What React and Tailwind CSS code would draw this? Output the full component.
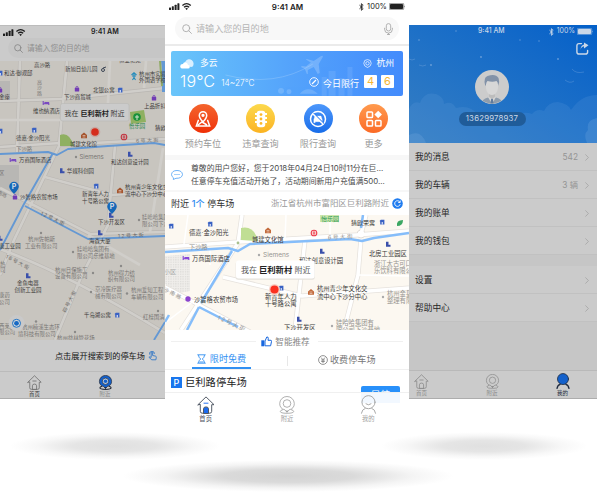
import React from "react";

/* ---------- shared glyphs ---------- */
const Signal = () => (
  <svg className="h-[9px] w-[24px]" viewBox="0 0 24 9" fill="currentColor">
    <rect x="0" y="5.5" width="2" height="2.5" rx=".5" />
    <rect x="2.8" y="4.3" width="2" height="3.7" rx=".5" />
    <rect x="5.6" y="2.8" width="2" height="5.2" rx=".5" />
    <rect x="8.4" y="1.2" width="2" height="6.8" rx=".5" />
    <g fill="none" stroke="currentColor" strokeWidth="1.3">
      <path d="M13.4 3.4Q17.6-.2 21.8 3.4" />
      <path d="M15 5.3Q17.6 3.2 20.2 5.3" />
    </g>
    <path d="M16.2 6.6Q17.6 5.6 19 6.6L17.6 8.1z" />
  </svg>
);
const Power = () => (
  <div className="flex items-center gap-[3px]">
    <svg className="h-[8px] w-[5px]" viewBox="0 0 5 8" fill="none" stroke="currentColor" strokeWidth=".9">
      <path d="M.5 2.2 4.2 5.6 2.4 7.3V.7L4.2 2.4.5 5.8" />
    </svg>
    <span>100%</span>
    <svg className="-ml-[1px] h-[7px] w-[17px]" viewBox="0 0 17 7">
      <rect x=".3" y=".3" width="14.4" height="6.4" rx="1.2" fill="none" stroke="currentColor" strokeWidth=".5" />
      <rect x="1" y="1" width="13" height="5" rx=".7" fill="currentColor" />
      <path d="M15.5 2.4q1 1 0 2.2z" fill="currentColor" />
    </svg>
  </div>
);
const SearchIcon = ({ className }) => (
  <svg className={className} viewBox="0 0 10 10" fill="none" stroke="currentColor" strokeWidth=".9" strokeLinecap="round">
    <circle cx="4.2" cy="4.2" r="3.5" />
    <path d="m6.8 6.8 2.6 2.6" />
  </svg>
);
const HomeIcon = ({ className, active }) => (
  <svg className={className} viewBox="0 0 18 18" fill="none" stroke="currentColor" strokeWidth=".95" strokeLinejoin="round" strokeLinecap="round">
    <path d="M1 8.7 9 .9l8 7.8H14.7v6.6q0 1.9-1.9 1.9H5.2q-1.9 0-1.9-1.9V8.7z" />
    <path d="M6.5 17.1v-4.2q0-2 2.5-2t2.5 2v4.2z" fill={active ? "#1b6bf0" : "none"} />
    <path d="M7 7.2h4" stroke={active ? "#1b6bf0" : "currentColor"} />
  </svg>
);
const NearIcon = ({ className, active }) => (
  <svg className={className} viewBox="0 0 18 18" fill="none" stroke="currentColor" strokeWidth=".85">
    <path d="M5 13.6q-2.7.7-2.7 1.8 0 1.9 6.7 1.9t6.7-1.9q0-1.1-2.7-1.8" strokeWidth={active ? "1.3" : ".85"} />
    <path d="M9 16.1 7 13.9Q1.7 12.6 1.7 7.6A7.2 7.2 0 0 1 9 .5a7.2 7.2 0 0 1 7.3 7.1q0 5-5.3 6.3z" fill={active ? "#1461cb" : "none"} />
    <circle cx="9" cy="7.5" r="3.8" fill={active ? "#bed1e8" : "none"} />
    {active && <circle cx="9" cy="7.5" r="2.1" fill="#1461cb" stroke="none" />}
    <path d="m8 15 1 1.3 1-1.3z" fill="currentColor" />
  </svg>
);
const MineIcon = ({ className, active }) => (
  <svg className={className} viewBox="0 0 18 18" fill="none" stroke="currentColor" strokeWidth=".9" strokeLinecap="round">
    <circle cx="9" cy="6.8" r="6.2" fill={active ? "#1461cb" : "none"} />
    {!active && <path d="M6.6 8.4q2.4 2 4.8 0" />}
    <path d="M5.8 12.7Q2.8 13.5 2.3 17.3M12.2 12.7q3 .8 3.5 4.6" strokeWidth={active ? "1.5" : ".9"} />
  </svg>
);

/* ---------- map glyphs ---------- */
const T = ({ x, y, s = 5.4, f = "#3b3a39", r = 0, w = 400, children }) => (
  <text x={x} y={y + s * 0.37} fontSize={s} fill={f} fontWeight={w} transform={r ? `rotate(${r} ${x} ${y})` : undefined}>
    {children}
  </text>
);
const Bld = ({ x, y, c = "#3a50ab" }) => (
  <path d={`M${x - 2} ${y - 2.2}h2.5v3h2v2h-4.5z`} fill={c} />
);
const Hs = ({ x, y, c = "#3a62c4" }) => (
  <g>
    <path d={`M${x - 2.4} ${y - 1}l1.2-1.2h3.6v4.6h-4.2v-2.6z`} fill={c} />
    <path d={`M${x - 0.4} ${y}h1.4v2.4h-1.4z`} fill="#fff" opacity=".7" />
  </g>
);
const Hall = ({ x, y, c }) => (
  <g>
    <path d={`M${x - 3} ${y - 0.6}l3-2.4 3 2.4v3.4h-6z`} fill={c} />
    <path d={`M${x - 1.4} ${y}h2.8M${x - 1.4} ${y + 1.5}h2.8`} stroke="#fff" strokeWidth=".6" opacity=".8" />
  </g>
);
const Bag = ({ x, y, c = "#713bb5" }) => (
  <g>
    <rect x={x - 2.2} y={y - 1.2} width="4.4" height="3.8" rx=".6" fill={c} />
    <path d={`M${x - 1.1} ${y - 1}q0-1.8 1.1-1.8t1.1 1.8`} fill="none" stroke={c} strokeWidth=".7" />
  </g>
);
const Bed = ({ x, y, c = "#7a4bc0" }) => (
  <path d={`M${x - 2.8} ${y - 2}v4M${x - 2.8} ${y + 0.8}h5.6v1.2M${x - 1.6} ${y - 0.4}h4.2v1`} fill="none" stroke={c} strokeWidth="1.1" />
);
const Dot = ({ x, y, c = "#8b8a88" }) => <circle cx={x} cy={y} r="1.2" fill={c} />;
const Metro = ({ x, y, c }) => (
  <g fill="none" stroke={c}>
    <circle cx={x} cy={y} r="2.8" strokeWidth="1.1" />
    <path d={`M${x} ${y - 2}v4M${x - 1.5} ${y}h3`} strokeWidth=".9" />
  </g>
);
const Parking = ({ x, y }) => (
  <g>
    <path d={`M${x} ${y + 7}q-4.8-4.6-4.8-7.4a4.8 4.8 0 0 1 9.6 0q0 2.8-4.8 7.4z`} fill="#1668b8" />
    <text x={x} y={y + 2} fontSize="7" fontWeight="700" fill="#d7dde4" textAnchor="middle">P</text>
  </g>
);

const G = "#787674";

function NearbyMap() {
  return (
    <svg className="h-[279px] w-[165px] shrink-0" viewBox="0 61 165 279">
      <rect x="0" y="61" width="165" height="279" fill="#c8c5bf" />
      <path d="M0 81h10v17H0zM0 165h19v35l-19-9z" fill="#b8b7b4" />
      <g fill="none" stroke="#b9b6b2" strokeWidth="3.8">
        <path d="M67 61 59 146 14 240 0 275M0 101 60 99 165 88M0 188 90 234 165 232M115 146 108 225 82 275 55 340M45 177 112 195 165 191M0 249Q70 275 165 333M20 61 17 152" />
        <path d="M59 145 165 139M0 147 60 143" />
      </g>
      <g fill="none" stroke="#d0ceca" strokeWidth="2.7">
        <path d="M67 61 59 146 14 240 0 275M0 101 60 99 165 88M0 188 90 234 165 232M115 146 108 225 82 275 55 340M45 177 112 195 165 191M0 249Q70 275 165 333M20 61 17 152" />
        <path d="M59 145 165 139M0 147 60 143M110 61 108 103M146 61 144 88M163 148 150 232M0 120 60 120M88 235 140 265" />
      </g>
      <g fill="none" stroke="#6498d3" strokeWidth="1.9" strokeLinejoin="round">
        <path d="M0 154 48 152 57 155 68 149 108 146 154 143 165 145M53 153 24 204 0 250M25 206 88 239 165 236M165 322 154 340M162 61 165 90" />
        <path d="M164 61V92" strokeWidth="4" />
      </g>
      <path d="M159 61h2l2 25h-2z" fill="#90ab67" />
      <path d="M60 146V135q9-4 14 11zM130 112l14-2 2 12-15 2z" fill="#8fb061" />
      <circle cx="137" cy="117" r="3.8" fill="#18913a" />
      <path d="M137 115v5m-2-3h4" stroke="#d2dfcc" strokeWidth="1" />
      <T x={34} y={65}>高沙路</T><T x={119} y={60}>恒业花苑</T>
      <T x={4} y={73}>和达·御观邸</T><Hs x={0} y={73} />
      <T x={65} y={69}>新旭日幼儿园</T>
      <circle cx="103" cy="70" r="1.5" fill="none" stroke="#3d4655" /><path d="m103 68 3-1" stroke="#3d4655" />
      <path d="M131.500 75 134 72.800l2.500 2.200M134 74v4.500M132 76h4M132.500 80l1.500-2.500 1.500 2.500" fill="none" stroke="#238bbb" strokeWidth="1.100" />
      <T x={139} y={74}>杭州市实验</T><T x={139} y={80.5}>外国语学校</T>
      <T x={37} y={82} s={5} f={G}>高</T><T x={37} y={87.5} s={5} f={G}>沙</T><T x={37} y={93} s={5} f={G}>路</T>
      <Bag x={77} y={89} /><T x={93} y={90.5}>北银公寓</T><Hs x={120} y={90} />
      <T x={64} y={97.5}>下沙商贸城</T><T x={-1} y={97.5}>金座</T><Bag x={0} y={90} />
      <Bed x={46} y={103} /><T x={33} y={111}>维也纳酒店</T>
      <Bag x={154} y={98} /><T x={144} y={106}>上品折扣</T>
      <T x={129} y={126} f="#25844a">怡乐园</T><T x={155} y={128.5}>猜欧</T>
      <Hs x={34} y={130} /><Hs x={0} y={131} /><T x={16} y={138}>德嘉·金沙阳光</T>
      <Hall x={84} y={135.5} c="#a5542d" /><T x={70} y={144}>城建文化馆</T>
      <Metro x={124} y={137} c="#c23440" /><T x={136} y={141} s={5} r={-3} f={G}>6 号 大 街</T>
      <T x={16} y={149.5} f={G}>下沙路</T>
      <Dot x={76} y={157} /><T x={79.5} y={157} s={6} f={G}>Siemens</T>
      <Bed x={13} y={160} /><T x={19} y={160.5}>万商国际酒店</T>
      <Bld x={130} y={154} /><T x={111} y={162.5}>和达创意设计园</T>
      <Bld x={62} y={170.5} /><T x={67} y={171}>华媒科创园</T><T x={-1} y={173} f={G}>区</T>
      <Bag x={15} y={197} /><T x={20} y={197}>沙智格农贸市场</T><T x={-2} y={192} r={27} s={4.8} f={G}>南路</T>
      <Hs x={96} y={186} /><T x={82} y={194}>新青年人力</T><T x={82} y={201}>十号路公寓</T>
      <Hall x={120} y={190.5} c="#a5542d" /><T x={125} y={187.5}>杭州青少年文化交</T><T x={125} y={194}>流中心下沙分中心</T>
      <Bld x={111} y={215} /><T x={98} y={222}>下沙开发区</T>
      <Dot x={139} y={220} /><T x={142} y={217.5} f={G}>娃哈哈集团</T><T x={142} y={224} f={G}>限公司下沙</T>
      <T x={41} y={213} s={5} r={25} f="#696765">1 2 号 大 街</T><T x={118} y={236} s={5} r={-3} f="#696765">1 2 号 大 街</T>
      <Dot x={41} y={233} /><T x={28} y={239.5} f={G}>杭州佐帕斯</T><T x={25} y={246} f={G}>工业有限公司</T>
      <Bld x={0} y={238} /><T x={-1} y={246}>康工业园</T>
      <Bld x={100} y={232.5} /><T x={89} y={241}>海森大厦</T>
      <Dot x={73} y={252} /><T x={77} y={249.5} f={G}>娃哈哈集团有</T><T x={77} y={256} f={G}>限公司乐维基地</T>
      <T x={6} y={256} s={5} r={28} f="#696765">1 6 号 大 街</T>
      <Dot x={93} y={273} /><T x={55} y={270} f={G}>杭州日保施工</T><T x={55} y={276.5} f={G}>设备有限公司</T>
      <Dot x={121} y={266} /><T x={108} y={273} f={G}>杭州得力纺</T><T x={108} y={279} f={G}>织有限公司</T>
      <T x={0} y={264} f={G}>热</T><T x={0} y={270.5} f={G}>司</T>
      <Bld x={28} y={275.5} /><T x={17} y={283.5}>金鱼电器</T><T x={14.5} y={290}>创新工业园</T>
      <T x={-1} y={295.5} f={G}>康药</T><T x={-1} y={302} f={G}>公司</T>
      <Dot x={91} y={292} /><T x={95} y={289.5} f={G}>京冷医疗器</T><T x={95} y={296} f={G}>械有限公司</T>
      <Dot x={127} y={293.5} /><T x={131} y={290.5} f={G}>杭州爱知工程</T><T x={131} y={297} f={G}>车辆有限公司</T>
      <T x={64} y={312} s={4.8} r={-63} f="#696765">四 号 大 街</T>
      <T x={84} y={315.5}>千岛湖公寓</T><Hs x={117} y={315} />
      <Dot x={158} y={311} /><T x={143} y={317.5} f={G}>红桂国清</T>
      <T x={-1} y={326} f={G}>西莱斯</T><T x={-1} y={332} f={G}>限公司</T>
      <Dot x={36} y={321.5} /><T x={22} y={327.5} f={G}>杭州楠溪生态环</T><T x={18} y={334} f={G}>境科技有限公司</T>
      <Dot x={75} y={332} /><T x={57} y={338.5} f={G}>杭州益林管花场</T>
      <circle cx="16.5" cy="323" r="8" fill="#c9c9c9" />
      <circle cx="16.5" cy="323.3" r="4" fill="#d4d7da" stroke="#2073c5" /><circle cx="16.5" cy="323.3" r="2.4" fill="#1769c4" />
      <Parking x={14} y={187} /><Parking x={112} y={207} />
      <rect x="60.5" y="103.5" width="68.5" height="17.5" rx="2" fill="#cbcbcb" stroke="#b9b8b6" strokeWidth=".6" />
      <T x={64.5} y={113} s={7}>我在</T><T x={80.5} y={113} s={7.1} w={700} f="#222">巨利新村</T><T x={110.5} y={113} s={7}>附近</T>
      <circle cx="95" cy="132" r="5.3" fill="#c8aaa3" /><circle cx="95" cy="132" r="3.8" fill="#d52d1c" />
    </svg>
  );
}

function CenterMap() {
  const L = 6.3;
  const g = "#969490";
  return (
    <svg className="h-[115px] w-[244px] shrink-0" viewBox="165 215 244 115">
      <rect x="165" y="215" width="244" height="115" fill="#fcf8f1" />
      <defs>
        <pattern id="blocks" width="2.4" height="2.4" patternUnits="userSpaceOnUse">
          <rect width="2.4" height="2.4" fill="#f0eeeb" /><rect width="1.3" height="1.3" fill="#dddcd9" />
        </pattern>
      </defs>
      <path d="M165 256l25-2v37l-10 2-15-9z" fill="url(#blocks)" />
      <g fill="none" stroke="#e6e2dd" strokeWidth="5">
        <path d="M242 215 238 243 181 330M165 247 238 242 356 235 409 231M165 287 250 332M223 277 302 296 409 288M305 240 295 330M361 239 358 275 344 330M361 234 366 215" />
      </g>
      <circle cx="361" cy="234" r="4" fill="#fff" stroke="#e1ddd8" />
      <g fill="none" stroke="#fff" strokeWidth="3.5">
        <path d="M242 215 238 243 181 330M165 247 238 242 356 235 409 231M165 287 250 332M223 277 302 296 409 288M305 240 295 330M361 239 358 275 344 330M361 234 366 215" />
        <path d="M188 215 184 244M286 215 285 239M330 215V234M210 250V265M409 276 358 275M165 323 195 300" strokeWidth="1.5" />
      </g>
      <g fill="none" stroke="#85bdfa" strokeWidth="2.5" strokeLinejoin="round">
        <path d="M165 252 228 248 238 251 250 244 350 239 362 241 374 238 409 233M232 251 201 303M199 307 187 330M199 307 238 327M361 228 363 215M165 322 169 315" />
      </g>
      <path d="M241 240V228q13-3 17 13z" fill="#c0de94" />
      <circle cx="238" cy="243" r="1.4" fill="#a8bf8d" />
      <rect x="320" y="214" width="19" height="8" fill="#cde7ae" />
      <T x={321} y={219} s={6} f="#319a58">怡乐园</T>
      <Hs x={171} y={226} /><Hs x={210} y={224} /><T x={189} y={233} s={L}>德嘉·金沙阳光</T>
      <Hall x={268} y={230.5} c="#c36a3b" /><T x={252} y={239.5} s={L}>城建文化馆</T>
      <T x={351} y={222.5} s={6}>猜欧荣寓</T><Hs x={382} y={222} />
      <path d="M397 226q-1-6 6-6 0 6-6 6z" fill="#3ba763" />
      <Metro x={314} y={233} c="#ed3c4d" /><T x={328} y={237.5} s={5.5} r={-3} f={g}>6 号 大 街</T>
      <T x={189} y={246.5} s={6.2} f={g}>下沙路</T>
      <Bed x={186} y={258} c="#8746d8" /><T x={192} y={259} s={L}>万商国际酒店</T>
      <Dot x={259} y={255} c="#aaa" /><T x={263} y={255} s={6.5} f={g}>Siemens</T>
      <Bld x={322} y={251} /><T x={299} y={260.5} s={L}>和达创意设计园</T>
      <Bld x={388} y={244} /><T x={369} y={253.5} s={L}>北房工业园区</T>
      <T x={374} y={263.5} s={L} f={g}>浙江太古可口</T><T x={374} y={271} s={L} f={g}>乐饮料有限公</T>
      <T x={164} y={272} s={6} f="#aaa">小区</T>
      <circle cx="188" cy="299" r="2.7" fill="#8b44cf" /><T x={194} y={299.5} s={L}>沙智格农贸市场</T>
      <T x={164} y={289} s={5.3} r={27} f={g}>沙 南 路</T>
      <Hs x={281} y={288} /><T x={265} y={297} s={L}>新青年人力</T><T x={265} y={304} s={L}>十号路公寓</T>
      <Hall x={311} y={292} c="#c36a3b" /><T x={317} y={289} s={L}>杭州青少年文化交</T><T x={317} y={296.5} s={L}>流中心下沙分中心</T>
      <T x={218} y={317} s={5.8} r={25} f={g}>1 2 号 大 街</T>
      <Bld x={299} y={319} /><T x={284} y={328} s={L}>下沙开发区</T>
      <Dot x={332} y={326} c="#aaa" /><T x={336} y={323} s={L} f={g}>娃哈哈集团有</T><T x={336} y={329.5} s={L} f={g}>限公司下沙基地</T>
      <Dot x={383} y={297} c="#aaa" /><T x={387} y={294} s={L} f={g}>杭州金星</T><T x={387} y={301} s={L} f={g}>整理有限</T>
      <rect x="235.7" y="261.5" width="79" height="18.200" rx="2.5" fill="#e5e2dc" />
      <rect x="236" y="260.5" width="78.5" height="18" rx="2.5" fill="#fff" />
      <T x={241} y={270} s={8} f="#555">我在</T><T x={259} y={270} s={8.3} w={700} f="#222">巨利新村</T><T x={294.5} y={270} s={8} f="#555">附近</T>
      <circle cx="274.5" cy="289.5" r="5.5" fill="#f9cfc4" /><circle cx="274.5" cy="289.5" r="4.1" fill="#fb3120" />
    </svg>
  );
}

/* ---------- left phone ---------- */
function NearbyPhone() {
  return (
    <section className="mt-[25px] h-[374px] w-[165px] shrink-0 overflow-hidden border-b border-[#adadad] bg-[#cbcbcb] text-[#1c1c1c]">
      <div className="flex h-[13px] w-[209px] items-center border-t border-[#bcbcbc] pl-[3px]">
        <Signal />
        <span className="ml-[64px] text-[7.1px] font-semibold leading-none">9:41 AM</span>
      </div>
      <div className="flex h-[23px] pl-[8px]">
        <div className="flex h-[20px] w-[190px] shrink-0 items-center gap-[4px] rounded-full bg-[#c6c6c6] pl-[6px] text-[#858585]">
          <SearchIcon className="h-[9px] w-[9px]" />
          <span className="pt-px text-[7.8px] leading-none text-[#8f8f8f]">请输入您的目的地</span>
        </div>
      </div>
      <NearbyMap />
      <div className="flex h-[31px] items-center justify-end gap-[3px] pr-[8px]">
        <span className="pt-px text-[8.2px] leading-none text-[#151515]">点击展开搜索到的停车场</span>
        <svg className="h-[10px] w-[9px]" viewBox="0 0 9 10" fill="none" stroke="#3478c5" strokeWidth=".9" strokeLinejoin="round">
          <path d="M3.2 6.4V2q0-.9.7-.9t.7.9v2.5l2.8.6q1 .2.9 1.2L7.9 8.8H3.8L.9 6.3q.7-1 2.3.1z" />
          <path d="M1.5 3.5Q1 .5 3.9.4T6.3 3" />
        </svg>
      </div>
      <div className="flex h-[28px] w-[212px] border-t border-[#bbb]">
        <div className="flex w-[69px] flex-col items-center pt-[3px] text-[#6c6c6c]">
          <HomeIcon className="h-[15px] w-[15px]" />
          <span className="mt-[1px] text-[5.4px] leading-[7px] text-[#333]">首页</span>
        </div>
        <div className="flex w-[72px] flex-col items-center pt-[3px] text-[#252b38]">
          <NearIcon active className="h-[15px] w-[15px]" />
          <span className="mt-[1px] text-[5.4px] leading-[7px] text-[#888]">附近</span>
        </div>
      </div>
    </section>
  );
}

/* ---------- centre phone ---------- */
const shortcuts = [
  { label: "预约车位", bg: "bg-linear-to-b from-[#f4632c] to-[#ef2e04]", w: "w-[76px]", icon: (
    <><path d="M9 11.8Q5.3 8 5.3 5.4a3.7 3.7 0 0 1 7.4 0Q12.7 8 9 11.8z" /><circle cx="9" cy="5.3" r=".9" /><path d="M5 10.4H4.3L2.3 16h13.4l-2-5.6H13M4 15l4-3 5 3" /></>
  ) },
  { label: "违章查询", bg: "bg-linear-to-b from-[#fcd94c] to-[#fbb321]", w: "w-[39px]", icon: (
    <><rect x="5.5" y="1.5" width="7" height="15" rx="2" fill="#fff" /><path d="M3 4h3M3 8h3M3 12h3M12 4h3M12 8h3M12 12h3" strokeWidth="2" /><g fill="#fcb92b" stroke="none"><circle cx="9" cy="4.6" r="1.4" /><circle cx="9" cy="9" r="1.4" /><circle cx="9" cy="13.4" r="1.4" /></g></>
  ) },
  { label: "限行查询", bg: "bg-linear-to-b from-[#4c97fb] to-[#176de9]", w: "w-[76px]", icon: (
    <><circle cx="9" cy="9" r="7.5" /><path d="M4.8 9.5 6 6h6l1.2 3.5v3.2h-1.4v-1H6.2v1H4.8z" fill="#fff" strokeWidth=".3" /><path d="m4.400 3.400 10.400 10.400" stroke="#2c7cf1" strokeWidth="1.500" /><path d="m3.8 3.8 10.4 10.4" /></>
  ) },
  { label: "更多", bg: "bg-linear-to-b from-[#ff9a4e] to-[#fb6a25]", w: "w-[35px]", icon: (
    <><rect x="2" y="2" width="5.5" height="5.5" rx=".8" /><rect x="2" y="10.5" width="5.5" height="5.5" rx=".8" /><rect x="10.5" y="10.5" width="5.5" height="5.5" rx=".8" /><path d="m13.2 1.8 2.700 2.700-2.700 2.700-2.700-2.700z" fill="#fff" /></>
  ) },
];

function Weather() {
  return (
    <div className="mx-[6px] mt-[5px] grid h-[45px] shrink-0 grid-cols-1 overflow-hidden rounded-[2px] bg-linear-to-r from-[#6ac5fa] via-[#55a4fb] to-[#438bfc] text-white">
      <svg className="col-start-1 row-start-1 h-[45px] w-[232px]" viewBox="0 0 234 45">
        <path d="M55 24Q105 37 143 13" fill="none" stroke="#fff" strokeOpacity=".18" />
        <path d="m137 8 7 2 7-5q3-1 2 1l-4 7 1 9-2 1-4-7-6 3v4l-1 0-2-5-4-2 1-1 4 .5 5-4-5-3z" fill="#fff" opacity=".2" />
        <g fill="#fff" opacity=".09"><rect x="152" y="26" width="5" height="19" /><rect x="159" y="20" width="7" height="25" /><rect x="169" y="27" width="6" height="18" /><rect x="178" y="16" width="5" height="29" /></g>
        <g fill="#fff" opacity=".16"><circle cx="111" cy="40" r="3" /><circle cx="119" cy="41" r="2.5" /><path d="M130 43q8-9 18 0z" /></g>
      </svg>
      <div className="col-start-1 row-start-1 flex justify-between pl-[9px] pr-[9px]">
        <div className="flex flex-col pt-[6px]">
          <div className="flex h-[12px] items-center gap-[6px]">
            <svg className="h-[11px] w-[14px]" viewBox="0 0 14 11">
              <path d="M5 7a4.4 4.4 0 1 1 8.6-1.5Q13.6 9 11 9z" fill="#d9efff" />
              <path d="M3 10.5Q.2 10.5.2 8.2T3 6q.5-2 2.6-1.6T8 7q2 .2 1.8 1.9T8 10.5z" fill="#fff" />
            </svg>
            <span className="pt-px text-[8.8px] leading-none">多云</span>
          </div>
          <div className="flex h-[24px] items-center">
            <span className="text-[16px] font-light leading-none tracking-[.2px]">19℃</span>
            <span className="ml-[6px] mt-[4px] text-[8.3px] font-light leading-none">14~27℃</span>
          </div>
        </div>
        <div className="flex flex-col items-end pt-[6px]">
          <div className="flex h-[12px] items-center gap-[4px]">
            <svg className="h-[9px] w-[9px]" viewBox="0 0 9 9" fill="none" stroke="#fff" strokeWidth=".7"><path d="M4.5 8.5Q.8 7.3.8 4.3a3.7 3.7 0 0 1 7.4 0q0 3-3.7 4.2z" /><circle cx="4.5" cy="4.3" r="1.7" /></svg>
            <span className="pt-px text-[8.8px] leading-none">杭州</span>
          </div>
          <div className="mt-[6px] flex h-[13px] items-center">
            <svg className="h-[10px] w-[10px]" viewBox="0 0 10 10" fill="none" stroke="#fff" strokeWidth=".9"><circle cx="5" cy="5" r="4.3" /><path d="m3 7 4-4" strokeWidth="1.3" /></svg>
            <span className="ml-[4px] mt-[3px] text-[9px] leading-none">今日限行</span>
            <span className="ml-[5px] flex h-[13px] w-[13px] items-center justify-center rounded-[1px] bg-white text-[11px] leading-none text-[#f6b634]">4</span>
            <span className="ml-[4px] flex h-[13px] w-[13px] items-center justify-center rounded-[1px] bg-white text-[11px] leading-none text-[#f6b634]">6</span>
          </div>
        </div>
      </div>
    </div>
  );
}

function HomePhone() {
  return (
    <section className="flex h-[430px] w-[244px] shrink-0 flex-col bg-white text-[#222]">
      <div className="grid h-[13px] shrink-0 grid-cols-3 items-center pl-[4px] pr-[3px] text-[8px] font-semibold leading-none">
        <Signal />
        <span className="text-center">9:41 AM</span>
        <div className="flex justify-end text-[7.5px] font-normal"><Power /></div>
      </div>
      <div className="h-[33px] shrink-0 border-b-2 border-[#ebebeb] pt-[4px]">
        <div className="mx-[10px] flex h-[23px] items-center rounded-full bg-[#f8f8f8] pl-[7px] pr-[6px] text-[#aaa]">
          <SearchIcon className="h-[10px] w-[10px]" />
          <span className="ml-[4px] pt-px text-[9.1px] leading-none text-[#b5b5b5]">请输入您的目的地</span>
          <svg className="ml-auto h-[12px] w-[9px]" viewBox="0 0 9 12" fill="none" stroke="#aaa" strokeWidth=".9"><rect x="2.3" y=".6" width="4.4" height="7.4" rx="2.2" /><path d="M.6 4.8v1.4a3.9 3.9 0 0 0 7.8 0V4.8M4.5 10v1.8M3 11.5h3" /></svg>
        </div>
      </div>
      <Weather />
      <div className="flex h-[59px] shrink-0 pt-[8px]">
        {shortcuts.map((s) => (
          <div key={s.label} className={`flex flex-col items-center ${s.w}`}>
            <div className={`flex h-[29px] w-[29px] shrink-0 items-center justify-center rounded-full ${s.bg}`}>
              <svg className="h-[18px] w-[18px]" viewBox="0 0 18 18" fill="none" stroke="#fff" strokeWidth="1.5">{s.icon}</svg>
            </div>
            <span className="mt-[5px] whitespace-nowrap text-[9.1px] leading-[11px] text-[#999]">{s.label}</span>
          </div>
        ))}
      </div>
      <div className="flex h-[37px] shrink-0 items-center border-t-[5px] border-b-2 border-[#f7f7f7] pl-[6px]">
        <svg className="h-[12px] w-[12px]" viewBox="0 0 12 12" fill="none" stroke="#4aa0f5" strokeWidth=".8"><path d="M2.5 8.8Q.5 7.6.5 5.5 1 1.5 6 1.5t5.5 4Q11 9.5 5 9.3L2.3 10.5z" /><path d="M3.5 5.5h1M5.5 5.5h1M7.5 5.5h1" strokeWidth="1.1" /></svg>
        <div className="ml-[8px] whitespace-nowrap text-[7.85px] leading-[13px] text-[#4a4a4a]">
          <div>尊敬的用户您好，您于2018年04月24日10时11分在巨...</div>
          <div>任意停车充值活动开始了，活动期间新用户充值满500...</div>
        </div>
      </div>
      <div className="flex h-[23px] shrink-0 items-center justify-between pl-[6px] pr-[6px]">
        <span className="text-[9.1px] leading-none text-[#333]">附近 <b className="font-medium text-[#2f8cf0]">1个</b> 停车场</span>
        <div className="flex items-center gap-[3px]">
          <span className="text-[8.45px] leading-none text-[#999]">浙江省杭州市富阳区巨利路附近</span>
          <svg className="h-[11px] w-[11px]" viewBox="0 0 11 11"><circle cx="5.5" cy="5.5" r="5.3" fill="#207cef" /><path d="M7.8 4A2.8 2.8 0 1 0 8.2 6.2M8.2 2.5v2H6.2" fill="none" stroke="#fff" strokeWidth=".9" /></svg>
        </div>
      </div>
      <CenterMap />
      <div className="flex h-[21px] shrink-0 items-center px-[6px] pt-[2px]">
        <i className="h-px flex-1 bg-[#f0f0f0]" />
        <svg className="ml-[5px] mr-[3px] h-[11px] w-[11px]" viewBox="0 0 11 11"><rect x=".3" y="4.3" width="3" height="6" fill="#1767df" /><path d="M4 5 5.8 1q1.7-.3 1.5 1.5L7 4.3h3q.8.2.5 1.2L9.6 9.8H4z" fill="none" stroke="#1767df" /></svg>
        <span className="pt-px text-[8.6px] leading-none text-[#888]">智能推荐</span>
        <i className="ml-[8px] h-px flex-1 bg-[#f0f0f0]" />
      </div>
      <div className="flex h-[19px] shrink-0 border-b border-[#f0f0f0] text-[9.1px] leading-none">
        <div className="ml-[27px] flex w-[59px] items-center justify-center gap-[4px] border-b-2 border-[#3190f2] text-[#3190f2]">
          <svg className="h-[10px] w-[9px]" viewBox="0 0 9 10" fill="none" stroke="currentColor" strokeWidth=".9"><path d="M.3.8h8.4M.3 9.2h8.4M1.5 1q0 2.5 2.2 4Q1.5 6.5 1.5 9M7.5 1q0 2.5-2.2 4 2.2 1.5 2.2 4" /><path d="M2.5 8h4" /></svg>
          <span className="whitespace-nowrap">限时免费</span>
        </div>
        <i className="ml-[36px] mt-[5px] h-[10px] w-px bg-[#e7e7e7]" />
        <div className="ml-[30px] flex items-center gap-[2px] pb-[1px] text-[#777]">
          <svg className="h-[10px] w-[10px]" viewBox="0 0 10 10" fill="none" stroke="currentColor" strokeWidth=".8"><circle cx="5" cy="5" r="4.4" /><path d="m3 2.5 2 2.3L7 2.5M5 4.8V8M3.2 5h3.6M3.2 6.5h3.6" /></svg>
          <span className="whitespace-nowrap">收费停车场</span>
        </div>
      </div>
      <div className="flex h-[22px] shrink-0 overflow-hidden pl-[6px] pr-[9px]">
        <div className="mt-[7px] flex h-[11px] w-[11px] items-center justify-center bg-[#1976ed] text-[9px] font-medium leading-none text-white">P</div>
        <span className="ml-[3px] mt-[7px] text-[10.3px] leading-[11px] text-[#222]">巨利路停车场</span>
        <div className="ml-auto mt-[16px] h-[17px] w-[39px] rounded-[2px] bg-[#2890fa] pt-[3px] text-center text-[9.5px] leading-[11px] text-white">导航</div>
      </div>
      <div className="grid grid-cols-3 border-t border-[#f0f0f0] text-[6.3px] leading-[8px]">
        <div className="flex flex-col items-center pt-[3px] text-[#4b5360]"><HomeIcon active className="h-[18px] w-[18px]" /><span className="mt-px">首页</span></div>
        <div className="flex flex-col items-center pt-[3px] text-[#a3a3a3]"><NearIcon className="h-[18px] w-[18px]" /><span className="mt-px">附近</span></div>
        <div className="flex flex-col items-center bg-[linear-gradient(#f2f8ff,#f2f8ff)] bg-[length:39px_10px] bg-[position:33px_0] bg-no-repeat pt-[2px] text-[#a3a3a3]"><MineIcon className="h-[19px] w-[19px]" /><span className="mt-px">我的</span></div>
      </div>
    </section>
  );
}

/* ---------- right phone ---------- */
function Row({ label, value }) {
  return (
    <div className="flex h-[28px] shrink-0 items-center border-b border-[#c1c1c1] bg-[#cbcbcb] pl-[6px] pr-[8px] pt-[2px] text-[#262626]">
      <span className="text-[8.7px] leading-none">{label}</span>
      <span className="ml-auto mr-[7px] text-[8.3px] leading-none text-[#949494]">{value}</span>
      <svg className="h-[7px] w-[4px]" viewBox="0 0 4 7" fill="none" stroke="#a5a5a5" strokeWidth=".8"><path d="m.4.4 3 3.1-3 3.1" /></svg>
    </div>
  );
}

function MinePhone() {
  return (
    <section className="mt-[25px] flex h-[374px] w-[188px] shrink-0 flex-col overflow-hidden border-b border-[#adadad] bg-[#c6c6c6]">
      <div className="grid h-[118px] shrink-0 bg-linear-to-tr from-[#357ec2] via-[#1d70c7] to-[#0360c9]">
        <svg className="col-start-1 row-start-1 h-[118px] w-[188px]" viewBox="0 0 188 118">
          <path d="M0 84q4-9 11-6 4-12 16-9 8 3 8 10 8-4 12 4 14-4 22 7 8-3 16 3 10-5 20 0 8-8 18-4 5-6 12-3 4-9 14-9 11 2 13 8 10-15 26-15v48H0z" fill="#72a5df" opacity=".17" />
          <path d="M0 110q12-6 17 8H0zM188 93q-11 2-9 12-5 4-1 13h10z" fill="#8ab7e8" opacity=".2" />
          <g fill="#aac7e9" opacity=".55"><circle cx="10" cy="15" r=".8" /><circle cx="47" cy="6" r=".7" /><circle cx="72" cy="32" r=".9" /><circle cx="111" cy="15" r=".7" /><circle cx="149" cy="34" r=".9" /><circle cx="22" cy="40" r=".9" /><circle cx="130" cy="16" r=".7" /></g>
          <g fill="none" stroke="#aac7e9" opacity=".35" strokeWidth=".7"><path d="M163 44q4 5 12 3M156 55q5 4 9 1M0 34q3 2 6 0M10 40q4 2 7 0" /></g>
        </svg>
        <div className="col-start-1 row-start-1 text-[#cbd8e8]">
          <div className="flex h-[13px] items-center justify-between pl-[69px] pr-[3px] text-[6.9px] leading-none">
            <span className="font-medium">9:41 AM</span><Power />
          </div>
          <div className="flex h-[32px] justify-end pr-[8px] pt-[4px]">
            <svg className="h-[13px] w-[13px]" viewBox="0 0 13 13" fill="none" stroke="currentColor" strokeWidth="1.4" strokeLinecap="round"><path d="M5.5 1.6H3Q.9 1.6.9 3.7v6.2q0 2.1 2.1 2.1h6.5q2.1 0 2.1-2.1V8.5" /><path d="M4.5 8Q5 4.8 8 4.3V6.4l4.5-3.2L8 .4v2Q4.700 3.300 4.500 8z" fill="currentColor" stroke="none" /></svg>
          </div>
          <div className="flex flex-col items-center pr-[22px]">
            <svg className="h-[34px] w-[34px]" viewBox="0 0 34 34">
              <clipPath id="face"><circle cx="17" cy="17" r="16.5" /></clipPath>
              <circle cx="17" cy="17" r="17" fill="#ccc" />
              <g clipPath="url(#face)">
                <path d="M6.500 34q0-5 6.500-6.500h8q6.500 1.500 6.500 6.500z" fill="#8f9dac" />
                <path d="m13 27 4 7 4-7z" fill="#d5d5d5" />
                <path d="m16.200 28.500h1.600l.8 5.500h-3.200z" fill="#617b9c" />
                <path d="M14 22h6v5l-3 2-3-2z" fill="#bdbdbd" />
                <path d="M10.200 15.500Q8 8 12.500 6q8-3 11 2 1.500 4-.3 7.500z" fill="#8292a8" />
                <path d="M11 14.500q.2-2.500 1.500-3.500 5 1.500 9 0 1.500 1 1.500 3.500v4q-1 6-6 6.500-5-.5-6-6.500z" fill="#d7d7d7" />
              </g>
            </svg>
            <div className="mt-[8px] flex h-[14px] w-[67px] items-center justify-center rounded-full bg-[#205c99] text-[7.8px] leading-none tracking-[.2px]">13629978937</div>
          </div>
        </div>
      </div>
      <Row label="我的消息" value="542" />
      <Row label="我的车辆" value="3 辆" />
      <Row label="我的账单" />
      <Row label="我的钱包" />
      <div className="h-[11px] shrink-0" />
      <Row label="设置" />
      <Row label="帮助中心" />
      <div className="mt-auto flex h-[28px] shrink-0 justify-end border-t border-[#b9b9b9] bg-[#cbcbcb] text-[5.5px] leading-[7px] text-[#898989]">
        <div className="flex w-[59px] shrink-0 flex-col items-start pl-[5px] pt-[3px]"><HomeIcon className="h-[15px] w-[15px]" /><span className="ml-[2px] mt-px">首页</span></div>
        <div className="flex w-[48px] flex-col items-center pt-[3px]"><NearIcon className="h-[15px] w-[15px]" /><span className="mt-px">附近</span></div>
        <div className="ml-[12px] flex w-[69px] flex-col items-center pt-[2px] text-[#202c40]"><MineIcon active className="h-[16px] w-[16px]" /><span className="mt-px">我的</span></div>
      </div>
    </section>
  );
}

export default function App() {
  return (
    <main className="h-[494px] w-[597px] overflow-hidden bg-white font-['Inter','Noto_Sans_CJK_SC',sans-serif]">
      <div className="flex h-[430px] items-start">
        <NearbyPhone />
        <HomePhone />
        <MinePhone />
      </div>
      <div className="flex justify-between pl-[10px] pr-[10px] pt-[2px]">
        <div className="h-[28px] w-[210px] bg-[radial-gradient(closest-side,#e0e0e0_0%,#e5e5e5_40%,#f7f7f7_75%,#fff_100%)]" />
        <div className="h-[28px] w-[206px] bg-[radial-gradient(closest-side,#e0e0e0_0%,#e5e5e5_40%,#f7f7f7_75%,#fff_100%)]" />
      </div>
      <div className="mx-auto h-[32px] w-[330px] -translate-x-[11px] bg-[radial-gradient(closest-side,#d3d3d3_0%,#dadada_40%,#f4f4f4_75%,#fff_100%)]" />
    </main>
  );
}
